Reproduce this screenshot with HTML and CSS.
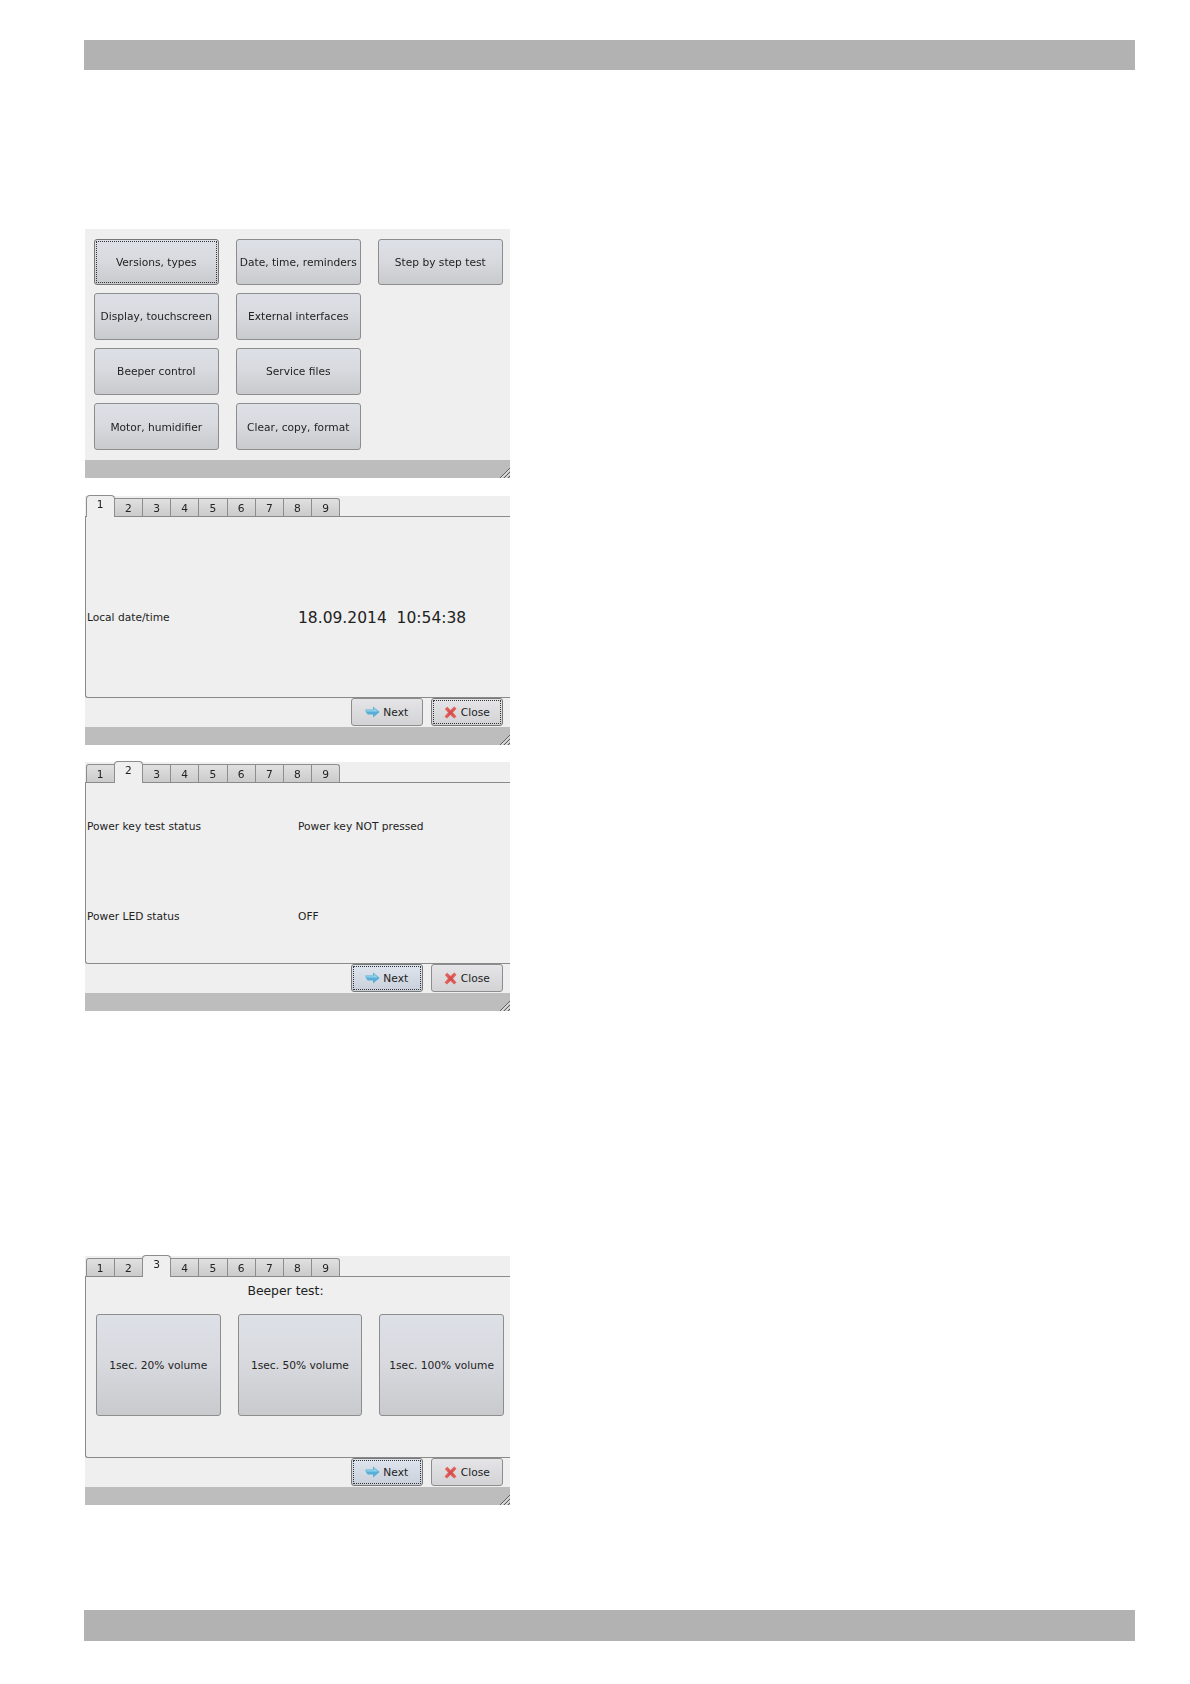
FILE: index.html
```html
<!DOCTYPE html>
<html lang="en">
<head>
<meta charset="utf-8">
<title>Service menu screens</title>
<link rel="stylesheet" href="styles.css">
</head>
<body>
<svg class="defs" width="0" height="0" aria-hidden="true">
  <symbol id="arrow" viewBox="0 0 14 11">
    <path d="M0.3 3.2H7.5V0.3L13.7 5.5L7.5 10.7V7.8H2.5Q0.3 6 0.3 3.2Z" fill="#58aed6"/>
    <path d="M1 3.8H8.3V1.8L12 5H1.5Z" fill="#92d5ec"/>
  </symbol>
  <symbol id="cross" viewBox="0 0 12 12">
    <path d="M0.8 2.8L3 0.8L6 3.6L9.5 0.5L11.5 2.6L8.3 6L11.5 9.6L9.3 11.6L6 8.4L2.7 11.6L0.5 9.6L3.7 6Z" fill="#e0605c"/>
    <path d="M3 2.5L6 5.2L9.5 2.2L7 6L9.5 9.8L6 7L3 9.5L5 6Z" fill="#d24a48"/>
  </symbol>
  <symbol id="grip" viewBox="0 0 10 10">
    <path d="M0 10L10 0M4 10L10 4M8 10L10 8" stroke="#5f5f5f" stroke-width="1"/>
    <path d="M1.5 10L10 1.5M5.5 10L10 5.5" stroke="#f4f4f4" stroke-width="1"/>
  </symbol>
</svg>

<header class="band band-top"></header>

<section class="panel panel-menu">
  <div class="menu">
    <button class="btn focus">Versions, types</button>
    <button class="btn">Display, touchscreen</button>
    <button class="btn">Beeper control</button>
    <button class="btn">Motor, humidifier</button>
    <button class="btn">Date, time, reminders</button>
    <button class="btn">External interfaces</button>
    <button class="btn">Service files</button>
    <button class="btn">Clear, copy, format</button>
    <button class="btn">Step by step test</button>
  </div>
  <div class="status"><svg class="grip"><use href="#grip"/></svg></div>
</section>

<section class="panel panel-date">
  <div class="tabs">
    <span class="tab active">1</span><span class="tab">2</span><span class="tab">3</span><span class="tab">4</span><span class="tab">5</span><span class="tab">6</span><span class="tab">7</span><span class="tab">8</span><span class="tab">9</span>
  </div>
  <div class="pane pane-date">
    <div class="row"><span class="label">Local date/time</span><span class="value big">18.09.2014&nbsp;&nbsp;10:54:38</span></div>
  </div>
  <div class="actions">
    <button class="btn small"><svg class="ico-next"><use href="#arrow"/></svg>Next</button>
    <button class="btn small focus"><svg class="ico-close"><use href="#cross"/></svg>Close</button>
  </div>
  <div class="status"><svg class="grip"><use href="#grip"/></svg></div>
</section>

<section class="panel panel-power">
  <div class="tabs">
    <span class="tab">1</span><span class="tab active">2</span><span class="tab">3</span><span class="tab">4</span><span class="tab">5</span><span class="tab">6</span><span class="tab">7</span><span class="tab">8</span><span class="tab">9</span>
  </div>
  <div class="pane pane-power">
    <div class="row"><span class="label">Power key test status</span><span class="value">Power key NOT pressed</span></div>
    <div class="row"><span class="label">Power LED status</span><span class="value">OFF</span></div>
  </div>
  <div class="actions">
    <button class="btn small focus next-focus"><svg class="ico-next"><use href="#arrow"/></svg>Next</button>
    <button class="btn small"><svg class="ico-close"><use href="#cross"/></svg>Close</button>
  </div>
  <div class="status"><svg class="grip"><use href="#grip"/></svg></div>
</section>

<section class="panel panel-beeper">
  <div class="tabs">
    <span class="tab">1</span><span class="tab">2</span><span class="tab active">3</span><span class="tab">4</span><span class="tab">5</span><span class="tab">6</span><span class="tab">7</span><span class="tab">8</span><span class="tab">9</span>
  </div>
  <div class="pane pane-beeper">
    <div class="title">Beeper test:</div>
    <div class="volumes">
      <button class="btn">1sec. 20% volume</button>
      <button class="btn">1sec. 50% volume</button>
      <button class="btn">1sec. 100% volume</button>
    </div>
  </div>
  <div class="actions">
    <button class="btn small focus next-focus"><svg class="ico-next"><use href="#arrow"/></svg>Next</button>
    <button class="btn small"><svg class="ico-close"><use href="#cross"/></svg>Close</button>
  </div>
  <div class="status"><svg class="grip"><use href="#grip"/></svg></div>
</section>

<footer class="band band-bottom"></footer>
</body>
</html>
```
FILE: styles.css
```css
* { box-sizing: border-box; }
html, body { margin: 0; padding: 0; background: #fff; }
body {
  width: 1190px;
  height: 1684px;
  overflow: hidden;
  font-family: "DejaVu Sans", sans-serif;
  font-size: 10.65px;
  color: #222;
}
.defs { display: block; height: 0; }

.band { width: 1051px; margin-left: 84px; background: #b2b2b2; }
.band-top { height: 30px; margin-top: 40px; }
.band-bottom { height: 31px; margin-top: 105px; }

.panel {
  width: 425px;
  height: 249px;
  margin-left: 85px;
  background: #efefef;
  display: flex;
  flex-direction: column;
  filter: blur(0.3px);
}
.panel-menu { margin-top: 159px; }
.panel-date { margin-top: 18px; }
.panel-power { margin-top: 17px; }
.panel-beeper { margin-top: 245px; }

.status { position: relative; height: 18px; flex: none; background: #bdbdbd; }
.grip { position: absolute; right: 0; bottom: 0; width: 10px; height: 10px; }

.btn {
  position: relative;
  display: flex;
  align-items: center;
  justify-content: center;
  padding: 1px 0 0;
  font: inherit;
  color: inherit;
  white-space: nowrap;
  border: 1px solid #8d8d8d;
  border-radius: 3px;
  background: linear-gradient(#dde0e7, #d8dadf 45%, #c9cace);
}
.btn.focus { border-color: #777; outline: 1px dotted #333; outline-offset: -3px; }

.menu {
  flex: 1;
  display: grid;
  grid-auto-flow: column;
  grid-template-rows: 45.5px repeat(3, 47px);
  grid-auto-columns: 124.5px;
  column-gap: 17.5px;
  row-gap: 8.2px;
  padding: 10px 0 0 9px;
}

.tabs { display: flex; align-items: flex-end; height: 20px; flex: none; position: relative; z-index: 1; }
.tab {
  width: 29.2px;
  height: 18px;
  display: flex;
  align-items: center;
  justify-content: center;
  border: 1px solid #8d8d8d;
  border-bottom: 0;
  margin-right: -1px;
  background: linear-gradient(#e0e0e0, #cbcbcb);
  padding-top: 1px;
}
.tab:first-child { border-top-left-radius: 3px; margin-left: 0.6px; }
.tab:last-child { border-top-right-radius: 3px; }
.tab.active {
  height: 22px;
  margin-bottom: -1px;
  background: #efefef;
  border-radius: 4px 4px 0 0;
  position: relative;
  z-index: 1;
  padding: 0 0 4px;
}

.pane {
  flex: 1;
  display: flex;
  flex-direction: column;
  border: 1px solid #8a8a8a;
  border-right: 0;
  border-radius: 0 0 0 3px;
}
.pane-date { padding-top: 92px; }
.pane-power { padding-top: 35px; row-gap: 74px; }
.row { display: flex; align-items: center; height: 16px; padding-left: 1px; }
.label { width: 211px; }
.big { font-size: 15.5px; padding-top: 1px; }

.pane-beeper { padding-left: 10px; }
.title { font-size: 12.4px; text-align: center; height: 37px; line-height: 28px; padding-right: 35px; }
.volumes { display: grid; grid-template-columns: repeat(3, 124.5px); column-gap: 17.2px; height: 102px; }

.actions {
  height: 29px;
  flex: none;
  display: flex;
  justify-content: flex-end;
  align-items: flex-start;
  column-gap: 8.5px;
  padding-right: 7.5px;
}
.btn.small {
  width: 71.5px;
  height: 28px;
  padding-top: 0;
  background: linear-gradient(#e5e5e7, #d3d3d6);
}
.btn.small.next-focus { background: linear-gradient(#dfe5ee, #c9d0da); }
.ico-next { width: 15px; height: 12px; margin-right: 3px; flex: none; }
.ico-close { width: 13px; height: 13px; margin-right: 4px; flex: none; }
```
